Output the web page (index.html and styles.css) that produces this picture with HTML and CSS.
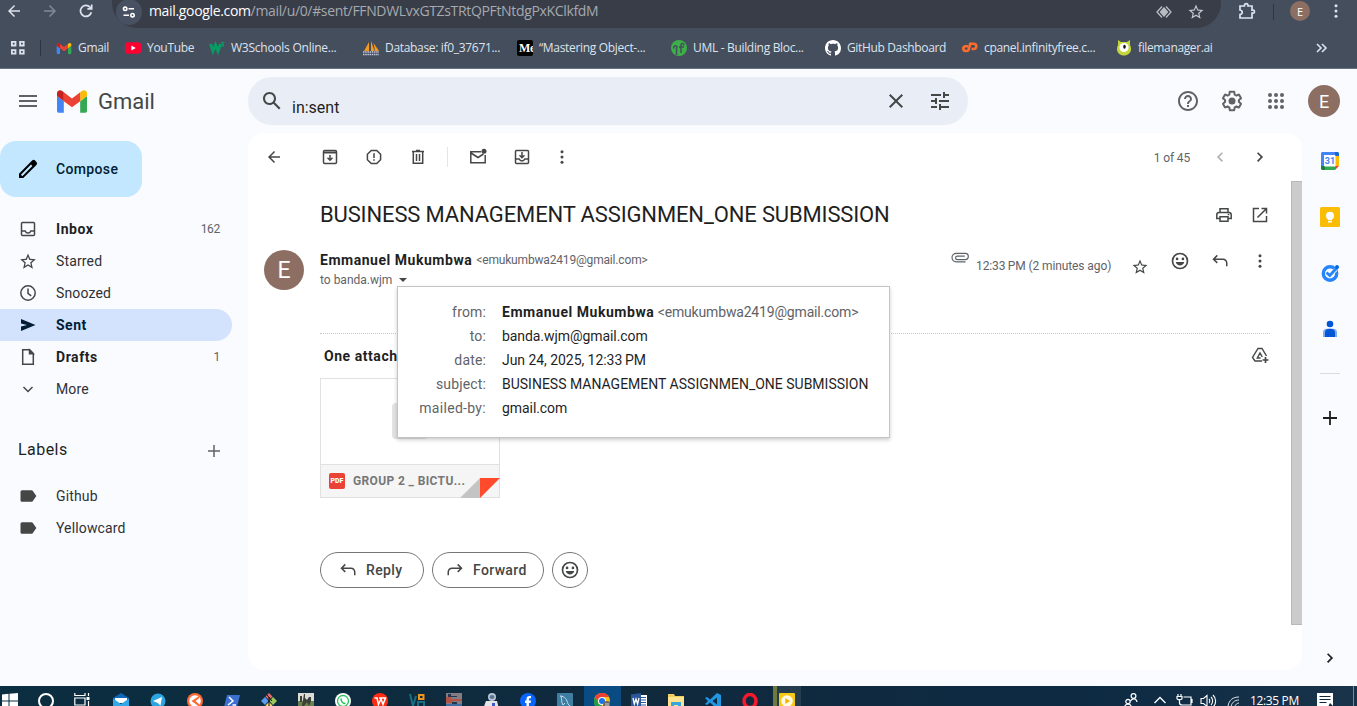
FILE: index.html
```html
<!DOCTYPE html>
<html lang="en">
<head>
<meta charset="utf-8">
<title>Gmail - Sent</title>
<link rel="stylesheet" href="styles.css">
</head>
<body>
<svg class="defs" width="0" height="0">
  <symbol id="star" viewBox="0 0 24 24"><path d="M22 9.24l-7.19-.62L12 2 9.19 8.63 2 9.24l5.46 4.73L5.82 21 12 17.27 18.18 21l-1.63-7.03L22 9.24zM12 15.4l-3.76 2.27 1-4.28-3.32-2.88 4.38-.38L12 6.1l1.71 4.04 4.38.38-3.32 2.88 1 4.28L12 15.4z"/></symbol>
  <symbol id="dots" viewBox="0 0 24 24"><circle cx="12" cy="5" r="2"/><circle cx="12" cy="12" r="2"/><circle cx="12" cy="19" r="2"/></symbol>
  <symbol id="gmail" viewBox="52 42 88 66"><path fill="#4285f4" d="M58 108h14V74L52 59v43c0 3.32 2.69 6 6 6"/><path fill="#34a853" d="M120 108h14c3.32 0 6-2.69 6-6V59l-20 15"/><path fill="#fbbc04" d="M120 48v26l20-15v-8c0-7.42-8.47-11.65-14.4-7.2"/><path fill="#ea4335" d="M72 74V48l24 18 24-18v26L96 92"/><path fill="#c5221f" d="M52 51v8l20 15V48l-5.6-4.2c-5.94-4.45-14.4-.22-14.4 7.2"/></symbol>
  <symbol id="back" viewBox="0 0 24 24"><path d="M20 11H7.83l5.59-5.59L12 4l-8 8 8 8 1.41-1.41L7.83 13H20v-2z"/></symbol>
  <symbol id="right" viewBox="0 0 24 24"><path d="M9.600 5.500 8 7.100l4.900 4.900L8 16.900l1.600 1.600 6.500-6.500z"/></symbol>
  <symbol id="smile" viewBox="0 0 24 24"><path fill-rule="evenodd" d="M12 2a10 10 0 1 0 0 20 10 10 0 0 0 0-20zm0 2a8 8 0 1 1 0 16 8 8 0 0 1 0-16z"/><circle cx="8.500" cy="9.500" r="1.600"/><circle cx="15.500" cy="9.500" r="1.600"/><path d="M6.800 13.200h10.400c-.8 2.600-2.800 4.300-5.200 4.300s-4.400-1.700-5.200-4.300z"/></symbol>
  <symbol id="reply" viewBox="0 0 24 24"><path d="M9.100 5.200 7.700 3.800 1.900 9.500l5.800 5.700 1.400-1.400-3.300-3.300H16c2.200 0 4 1.800 4 4V19h2v-4.500c0-3.300-2.700-6-6-6H5.800z"/></symbol>
  <symbol id="label" viewBox="0 0 24 24"><path d="M17.630 5.840C17.270 5.330 16.670 5 16 5L5 5.010C3.900 5.010 3 5.900 3 7v10c0 1.100.9 1.990 2 1.990L16 19c.67 0 1.270-.33 1.630-.84L22 12z"/></symbol>
</svg>

<header class="browser">
  <div class="toolbar">
    <div class="cell w28"><svg class="i18"><use href="#back"/></svg></div>
    <div class="cell w44 dim"><svg class="i18 flip"><use href="#back"/></svg></div>
    <div class="cell w28"><svg width="16" height="16" viewBox="0 0 16 16" fill="none" stroke="currentColor" stroke-width="1.700"><path d="M13.300 9.200A5.500 5.500 0 1 1 12 4.200l1.500 1.400"/><path d="M13.700 1.500v4.300H9.400"/></svg></div>
    <div class="omnibox">
      <span class="site"><svg width="14" height="14" viewBox="0 0 14 14" fill="none" stroke="currentColor" stroke-width="1.600"><circle cx="3.200" cy="3.800" r="1.700"/><path d="M6.500 3.800H12M1.500 10.200H7"/><circle cx="10.500" cy="10.200" r="1.700"/></svg></span>
      <span class="url"><b>mail.google.com</b>/mail/u/0/#sent/FFNDWLvxGTZsTRtQPFtNtdgPxKClkfdM</span>
      <svg class="lens" width="16" height="14" viewBox="0 0 16 14" fill="none" stroke="#b9bcc2" stroke-width="1.300"><path d="M6 1.500 1 7l5 5.500M10 1.500 15 7l-5 5.500"/><path fill="#b9bcc2" d="M8 3 4.500 7 8 11l3.500-4z"/></svg>
      <svg class="i18 ostar"><use href="#star"/></svg>
    </div>
    <div class="cell w52"><svg width="18" height="18" viewBox="0 0 18 18" fill="none" stroke="currentColor" stroke-width="1.700"><path d="M2 4h4.500V3a1.800 1.800 0 0 1 3.500 0v1h4v4.200h1a1.500 1.500 0 0 1 0 3h-1V16H2v-3.500c3-.5 3-4 0-4.500z"/></svg></div>
    <i class="vbar"></i>
    <div class="cell w52"><span class="avatar av20">E</span></div>
    <div class="cell w20"><svg class="i18"><use href="#dots"/></svg></div>
  </div>
  <nav class="bookmarks">
    <div class="apps"><svg width="16" height="16" viewBox="0 0 16 16" fill="none" stroke="currentColor" stroke-width="1.800"><path d="M1.900 1.900h3.600v3.600H1.900zM10.100 1.900h3.600v3.600h-3.600zM1.900 10.100h3.600v3.600H1.900zM10.100 10.100h3.600v3.600h-3.600z"/></svg></div>
    <i class="vbar"></i>
    <a class="bm b1"><svg width="16" height="11"><use href="#gmail"/></svg><span>Gmail</span></a>
    <a class="bm b2"><svg width="16" height="16" viewBox="0 0 16 16"><rect y="2.300" width="16" height="11.400" rx="3" fill="#f03"/><path d="M6.400 5.500v5L10.700 8z" fill="#fff"/></svg><span>YouTube</span></a>
    <a class="bm b3"><svg width="16" height="16" viewBox="0 0 16 16" fill="none" stroke="#089b63"><path stroke-width="3" d="M1.500 4l2.500 7L6.500 5l2.500 6 2.500-7"/><path stroke-width="1.200" d="M12 2.500h2.500L13.200 4.200c2 .2 1.700 2.500-.9 2"/></svg><span>W3Schools Online...</span></a>
    <a class="bm b4"><svg width="16" height="16" viewBox="0 0 16 16"><path fill="#f39a1f" d="M6 2 1 11h5zM8 1v10h3.500zM10.500 3l1.500 8h4z"/><path stroke="#c7cbe0" stroke-width="1.500" stroke-dasharray="1.500 .7" fill="none" d="M0 12h16M0 14.500h16"/></svg><span>Database: if0_37671...</span></a>
    <a class="bm b4"><span class="medium">Me</span><span>“Mastering Object-...</span></a>
    <a class="bm b4"><svg width="16" height="16" viewBox="0 0 16 16"><circle cx="8" cy="8" r="8" fill="#3daf48"/><path d="M5.500 15V8M2.500 8.500C3 5 6 5 6 8M10 13V5c0-2 3-2 3 .5M8 7h5" stroke="#454e5d" stroke-width="1.500" fill="none"/></svg><span>UML - Building Bloc...</span></a>
    <a class="bm b5"><svg width="16" height="16" viewBox="0 0 16 16"><path fill="#fff" d="M8 0C3.580 0 0 3.580 0 8c0 3.540 2.290 6.530 5.470 7.590.4.070.55-.17.55-.38 0-.19-.010-.82-.010-1.490-2.010.37-2.530-.49-2.690-.94-.09-.23-.48-.94-.82-1.130-.28-.15-.68-.52-.010-.53.63-.010 1.080.58 1.230.82.72 1.210 1.870.87 2.330.66.070-.52.28-.87.510-1.070-1.780-.2-3.640-.89-3.640-3.950 0-.87.310-1.590.82-2.150-.080-.2-.36-1.020.080-2.120 0 0 .67-.210 2.200.82.64-.18 1.320-.27 2-.27s1.360.09 2 .27c1.530-1.040 2.200-.82 2.200-.82.44 1.100.16 1.920.080 2.120.510.56.82 1.270.82 2.150 0 3.070-1.870 3.750-3.650 3.950.29.25.54.73.54 1.480 0 1.070-.010 1.930-.010 2.200 0 .210.15.46.55.38A8.010 8.010 0 0 0 16 8c0-4.420-3.580-8-8-8z"/></svg><span>GitHub Dashboard</span></a>
    <a class="bm b4"><svg width="16" height="16" viewBox="0 0 16 16" fill="none" stroke="#ff6c2c" stroke-width="2.600"><path d="M6 6.200H3.700a2.400 2.400 0 0 0 0 4.800H5c1 0 1.400-.5 1.600-1.300L8.200 3.800h3.500a2.600 2.600 0 0 1 0 5.200H9.500"/></svg><span>cpanel.infinityfree.c...</span></a>
    <a class="bm b6"><svg width="16" height="16" viewBox="0 0 16 16"><path fill="#c5d63c" d="M2 0l3 2h6l3-2v5c3 6-1 10.500-6 10.500S-1 11 2 5z"/><circle cx="8" cy="7.500" r="4.600" fill="#fff"/><ellipse cx="8.500" cy="6.800" rx="1.300" ry="2" fill="#111"/></svg><span>filemanager.ai</span></a>
    <svg class="more" width="12" height="10" viewBox="0 0 12 10" fill="none" stroke="currentColor" stroke-width="1.600"><path d="M1 1l4 4-4 4M6 1l4 4-4 4"/></svg>
  </nav>
</header>

<div class="app">
  <div class="top">
    <div class="brand">
      <svg width="24" height="24" viewBox="0 0 24 24" class="menu"><path d="M3 18h18v-2H3zm0-5h18v-2H3zM3 6v2h18V6z"/></svg>
      <svg width="30" height="23"><use href="#gmail"/></svg>
      <span class="wordmark">Gmail</span>
    </div>
    <div class="search">
      <svg width="24" height="24" viewBox="0 0 24 24"><path d="M20.490 19l-5.730-5.730C15.530 12.200 16 10.910 16 9.500 16 5.910 13.090 3 9.500 3S3 5.910 3 9.500 5.910 16 9.500 16c1.410 0 2.700-.47 3.770-1.240L19 20.490 20.490 19zM5 9.500C5 7.010 7.010 5 9.500 5S14 7.010 14 9.500 11.990 14 9.500 14 5 11.990 5 9.500z"/></svg>
      <span class="query">in:sent</span>
      <svg width="24" height="24" viewBox="0 0 24 24"><path d="M19 6.410L17.590 5 12 10.590 6.410 5 5 6.410 10.590 12 5 17.590 6.410 19 12 13.410 17.590 19 19 17.590 13.410 12z"/></svg>
      <svg width="24" height="24" viewBox="0 0 24 24" class="tune"><path d="M3 17v2h6v-2H3zM3 5v2h10V5H3zm10 16v-2h8v-2h-8v-2h-2v6h2zM7 9v2H3v2h4v2h2V9H7zm14 4v-2H11v2h10zm-6-4h2V7h4V5h-4V3h-2v6z"/></svg>
    </div>
    <div class="account">
      <svg width="24" height="24" viewBox="0 0 24 24"><path d="M11 18h2v-2h-2v2zm1-16C6.480 2 2 6.480 2 12s4.480 10 10 10 10-4.480 10-10S17.520 2 12 2zm0 18c-4.410 0-8-3.590-8-8s3.590-8 8-8 8 3.590 8 8-3.590 8-8 8zm0-14c-2.210 0-4 1.790-4 4h2c0-1.100.9-2 2-2s2 .9 2 2c0 2-3 1.750-3 5h2c0-2.250 3-2.500 3-5 0-2.210-1.790-4-4-4z"/></svg>
      <svg width="24" height="24" viewBox="0 0 24 24"><path d="M13.850 22.250h-3.700c-.74 0-1.360-.54-1.450-1.270l-.27-1.890c-.27-.14-.53-.29-.79-.46l-1.800.72c-.7.26-1.470-.03-1.810-.65L2.200 15.530c-.35-.66-.2-1.440.36-1.880l1.530-1.190c-.01-.15-.02-.3-.02-.46 0-.15.01-.31.02-.46l-1.520-1.190c-.59-.45-.74-1.260-.37-1.880l1.850-3.190c.34-.62 1.110-.9 1.790-.63l1.810.73c.26-.17.52-.32.78-.46l.27-1.910c.09-.7.71-1.250 1.440-1.250h3.700c.74 0 1.360.54 1.450 1.270l.27 1.890c.27.14.53.29.79.46l1.800-.72c.71-.26 1.480.03 1.820.65l1.840 3.180c.36.66.2 1.440-.36 1.880l-1.520 1.190c.01.15.02.3.02.46s-.01.31-.02.46l1.520 1.190c.56.45.72 1.230.37 1.860l-1.860 3.220c-.34.62-1.110.9-1.800.63l-1.800-.72c-.26.17-.52.32-.78.46l-.27 1.910c-.1.68-.72 1.220-1.460 1.220zm-3.230-2h2.760l.37-2.550.53-.22c.44-.18.88-.44 1.340-.78l.45-.34 2.380.96 1.380-2.400-2.030-1.580.07-.56c.03-.26.06-.51.06-.78s-.03-.53-.06-.78l-.07-.56 2.030-1.580-1.390-2.400-2.390.96-.45-.35c-.42-.32-.87-.58-1.330-.77l-.52-.22-.37-2.550h-2.760l-.37 2.550-.53.21c-.44.19-.88.44-1.340.79l-.45.33-2.380-.95-1.390 2.390 2.030 1.580-.07.56a7 7 0 0 0-.06.79c0 .26.02.53.06.78l.07.56-2.030 1.580 1.380 2.400 2.390-.96.45.35c.43.33.86.58 1.330.77l.53.22.38 2.550z"/><circle cx="12" cy="12" r="3.500"/></svg>
      <svg width="24" height="24" viewBox="0 0 24 24"><g id="r"><circle cx="6" cy="6" r="2"/><circle cx="12" cy="6" r="2"/><circle cx="18" cy="6" r="2"/></g><use href="#r" y="6"/><use href="#r" y="12"/></svg>
      <span class="avatar av32">E</span>
    </div>
  </div>

  <div class="body">
    <aside class="side">
      <div class="compose"><svg width="24" height="24" viewBox="0 0 24 24"><path fill-rule="evenodd" d="M20.400 4.900 19.100 3.600a2.100 2.100 0 0 0-3 0L3 16.700V21h4.300L20.400 7.900a2.100 2.100 0 0 0 0-3zM6.300 19.200 4.900 17.800 15 7.600 16.400 9z"/></svg><span>Compose</span></div>
      <div class="nav bold"><svg width="20" height="20" viewBox="0 0 20 20" fill="none" stroke="currentColor" stroke-width="1.500"><rect x="3.500" y="3.500" width="13" height="13" rx="1"/><path d="M3.500 12h3.700c1 2.700 4.600 2.700 5.600 0h3.700"/></svg><span>Inbox</span><em>162</em></div>
      <div class="nav"><svg width="19" height="19"><use href="#star"/></svg><span>Starred</span></div>
      <div class="nav"><svg width="20" height="20" viewBox="0 0 20 20" fill="none" stroke="currentColor" stroke-width="1.500"><circle cx="10" cy="10" r="7.200"/><path d="M10 5.500v4.800l3.200 2.600"/></svg><span>Snoozed</span></div>
      <div class="nav active"><svg width="20" height="20" viewBox="0 0 20 20"><path d="M3 16V11.500L9 10 3 8.500V4l14.500 6z"/></svg><span>Sent</span></div>
      <div class="nav bold"><svg width="20" height="20" viewBox="0 0 20 20" fill="none" stroke="currentColor" stroke-width="1.500"><path d="M4.700 2.800h7l3.600 3.700v10.700H4.700z"/><path fill="currentColor" d="M11.500 3v3.700h3.700z"/></svg><span>Drafts</span><em>1</em></div>
      <div class="nav"><svg width="20" height="20" viewBox="0 0 20 20" fill="none" stroke="currentColor" stroke-width="1.500"><path d="M5.500 8l4.500 4.500L14.500 8"/></svg><span>More</span></div>
      <div class="labels"><span>Labels</span><svg width="14" height="14" viewBox="0 0 14 14" stroke="currentColor" stroke-width="1.500"><path d="M7 1v12M1 7h12"/></svg></div>
      <div class="nav"><svg width="19" height="20"><use href="#label"/></svg><span>Github</span></div>
      <div class="nav"><svg width="19" height="20"><use href="#label"/></svg><span>Yellowcard</span></div>
    </aside>

    <main class="panel">
      <div class="actions">
        <div class="cell w52"><svg class="i18"><use href="#back"/></svg></div>
        <div class="cell w44 first"><svg width="20" height="20" viewBox="0 0 20 20" fill="none" stroke="currentColor" stroke-width="1.500"><rect x="3.500" y="3.500" width="13" height="13" rx="1.200"/><path d="M3.500 5.500h13" stroke-width="2"/><path d="M10 8v5M7.500 10.800l2.500 2.500 2.500-2.500"/></svg></div>
        <div class="cell w44"><svg width="20" height="20" viewBox="0 0 20 20" fill="none" stroke="currentColor" stroke-width="1.500"><path d="M7.300 3.400h5.400l3.900 3.900v5.400l-3.900 3.900H7.300l-3.900-3.900V7.300z"/><path d="M10 6.300v4.700M10 12.200v1.600"/></svg></div>
        <div class="cell w44"><svg width="20" height="20" viewBox="0 0 20 20" fill="none" stroke="currentColor" stroke-width="1.500"><path d="M5.300 5v11.300h9.400V5M4 4.500h12M8 3.500h4M8.500 7v7M11.500 7v7"/></svg></div>
        <i class="sep"></i>
        <div class="cell w44"><svg width="20" height="20" viewBox="0 0 20 20" fill="none" stroke="currentColor" stroke-width="1.500"><path d="M13 4.800H2.800v10.900h14.400V8M3 6l7 4.500L15.500 7"/><circle cx="16" cy="4.300" r="2.500" fill="currentColor" stroke="none"/></svg></div>
        <div class="cell w44"><svg width="20" height="20" viewBox="0 0 20 20" fill="none" stroke="currentColor" stroke-width="1.500"><rect x="3.500" y="3.500" width="13" height="13" rx="1"/><path d="M3.500 12h3.700c1 2.500 4.600 2.500 5.600 0h3.700M10 5v5.500M7.500 8.300l2.500 2.500 2.500-2.500"/></svg></div>
        <div class="cell w36"><svg class="i18"><use href="#dots"/></svg></div>
        <span class="count">1 of 45</span>
        <div class="cell w40 faint"><svg class="i18 flip"><use href="#right"/></svg></div>
        <div class="cell w40"><svg class="i18"><use href="#right"/></svg></div>
      </div>
      <div class="scroller">
        <div class="thread">
          <div class="subject">
            <h1>BUSINESS MANAGEMENT ASSIGNMEN_ONE SUBMISSION</h1>
            <div class="cell w36"><svg width="20" height="20" viewBox="0 0 20 20" fill="none" stroke="currentColor" stroke-width="1.500"><path d="M6 7V3.700h8V7M6 13.500H2.800V9.800c0-1.400.8-2.300 2.200-2.300h10c1.400 0 2.200.9 2.200 2.300v3.700H14"/><path d="M6 11.700h8v4.600H6z"/><path d="M13.700 9.500h1.600"/></svg></div>
            <div class="cell w36"><svg width="20" height="20" viewBox="0 0 20 20" fill="none" stroke="currentColor" stroke-width="1.500"><path d="M9 3.500H3.500v13h13V11M11.500 3.500h5v5M16.300 3.700 7.500 12.500"/></svg></div>
          </div>
          <div class="sender">
            <span class="avatar av40">E</span>
            <div class="who">
              <div class="from"><b>Emmanuel Mukumbwa</b><span>&lt;emukumbwa2419@gmail.com&gt;</span></div>
              <div class="to"><span>to banda.wjm</span><i class="caret"></i></div>
            </div>
            <svg class="clip" width="18" height="12" viewBox="0 0 18 12" fill="none" stroke="currentColor" stroke-width="1.200"><path d="M14.500 9.800H5.200a4.200 4.200 0 0 1 0-8.400h9a2.600 2.600 0 0 1 0 6.200H6.300a1.600 1.600 0 0 1 0-3.400h7.500"/></svg>
            <span class="time">12:33&#8201;PM (2 minutes ago)</span>
            <div class="cell w40 low"><svg class="i18"><use href="#star"/></svg></div>
            <div class="cell w40"><svg width="20" height="20"><use href="#smile"/></svg></div>
            <div class="cell w40"><svg class="i18"><use href="#reply"/></svg></div>
            <div class="cell w40"><svg class="i18"><use href="#dots"/></svg></div>
          </div>
          <div class="attach-head">
            <b>One attachment</b>
            <svg width="20" height="20" viewBox="0 0 20 20" fill="none" stroke="currentColor" stroke-width="1.400"><path d="M12 16H5L2.500 12.500 8 3.500h4L16.500 11M10.500 13H7.300L10 8l2.300 4"/><path d="M15.500 12v6M12.500 15h6" stroke-width="1.700"/></svg>
          </div>
          <div class="file">
            <div class="preview"><i></i></div>
            <div class="caption"><span class="pdf">PDF</span><span class="fname">GROUP 2 _ BICTU...</span>
              <svg class="fold" width="40" height="20" viewBox="0 0 40 20"><path fill="#c4c4c4" d="M0 20 20 0v20z"/><path fill="#ff4b2b" d="M20 0h20L20 20z"/></svg></div>
          </div>
          <div class="replies">
            <div class="pill p1"><svg class="i18"><use href="#reply"/></svg><span>Reply</span></div>
            <div class="pill p2"><svg class="i18 flip"><use href="#reply"/></svg><span>Forward</span></div>
            <div class="pill p3"><svg width="20" height="20"><use href="#smile"/></svg></div>
          </div>
          <dl class="details">
            <dt>from:</dt><dd><b>Emmanuel Mukumbwa</b> <span>&lt;emukumbwa2419@gmail.com&gt;</span></dd>
            <dt>to:</dt><dd class="d2">banda.wjm@gmail.com</dd>
            <dt>date:</dt><dd class="d3">Jun 24, 2025, 12:33&#8201;PM</dd>
            <dt>subject:</dt><dd class="d4">BUSINESS MANAGEMENT ASSIGNMEN_ONE SUBMISSION</dd>
            <dt class="wide">mailed-by:</dt><dd class="d2">gmail.com</dd>
          </dl>
        </div>
        <div class="thumb"></div>
      </div>
    </main>

    <aside class="addons">
      <svg width="20" height="20" viewBox="0 0 20 20"><path fill="#4285f4" d="M2 1h13v3H4v11H1V2z"/><path fill="#1967d2" d="M15 1h3l1 1v3h-4z"/><path fill="#fbbc04" d="M15 5h4v10h-4z"/><path fill="#34a853" d="M5 15h10v4H5z"/><path fill="#188038" d="M1 15h4v4H2l-1-1z"/><path fill="#ea4335" d="M15 15h4l-4 4z"/><path fill="#fff" d="M4.500 4.500h11v11h-11z"/><text x="10" y="13.200" text-anchor="middle" class="cal">31</text></svg>
      <svg width="20" height="20" viewBox="0 0 20 20"><rect width="20" height="20" rx="1.500" fill="#fbbc04"/><circle cx="10" cy="8.800" r="4" fill="#fff"/><path fill="#fff" d="M8 11h4v2.300H8zM8 14h4v1.500H8z"/></svg>
      <svg width="20" height="20" viewBox="0 0 20 20" fill="none"><circle cx="10" cy="10.500" r="6.700" stroke="#2684fc" stroke-width="3.400"/><path d="M6.800 9.500l3 3 6-6" stroke="#f8fafd" stroke-width="4"/><path d="M6.500 9.500l3.300 3 8.200-9" stroke="#2684fc" stroke-width="2.800"/><circle cx="17" cy="4" r="1.900" fill="#0066da"/></svg>
      <svg width="20" height="20" viewBox="0 0 20 20"><circle cx="10" cy="5" r="3.300" fill="#0056d6"/><path fill="#7baaf7" d="M3 18v-4.500C3 11 4.500 9.800 7 9.800h6c2.500 0 4 1.200 4 3.700V18z"/><path fill="#0056d6" d="M5 18v-4.300c0-2.500 1.500-3.900 5-3.900s5 1.400 5 3.900V18z"/></svg>
      <hr>
      <svg width="14" height="14" viewBox="0 0 14 14" stroke="#1f1f1f" stroke-width="1.800"><path d="M7 0v14M0 7h14"/></svg>
      <svg class="i18 expand"><use href="#right"/></svg>
    </aside>
  </div>
</div>

<footer class="taskbar">
  <div class="t start"><svg width="16" height="16" viewBox="0 0 16 16" fill="#fff"><path d="M0 1.500 6.500.8v6.700H0zM7.500.7 16 0v7.500H7.500zM0 8.500h6.500v6.700L0 14.500zM7.500 8.500H16V16l-8.500-.8z"/></svg></div>
  <div class="t"><svg width="16" height="16" viewBox="0 0 16 16" fill="none" stroke="#fff" stroke-width="2"><circle cx="8" cy="8" r="7"/></svg></div>
  <div class="t view"><svg width="16" height="16" viewBox="0 0 16 16" fill="none" stroke="#fff" stroke-width="1.200"><path d="M.8 0v2.500H11V0M.8 5h10.200v7H.8zM.8 16v-2H11v2M14.500 0v3M14.500 8v8"/><path stroke-width="3" d="M14 4v3"/></svg></div>
  <div class="t"><svg width="16" height="16" viewBox="0 0 16 16"><path fill="#1066b8" d="M0 5 8 0l8 5v4H0z"/><path fill="#fff" d="M2 5h12v5H2z"/><path fill="#32a8e8" d="M0 5.500 8 11l8-5.500V16H0z"/></svg></div>
  <div class="t"><svg width="16" height="16" viewBox="0 0 16 16"><circle cx="8" cy="8" r="7.500" fill="#2ca5e0"/><path fill="#fff" d="M3 8l9-4-1.500 8.500L7.700 10z"/></svg></div>
  <div class="t"><svg width="16" height="16" viewBox="0 0 16 16"><circle cx="8" cy="8" r="8" fill="#ff6a35"/><circle cx="8" cy="8" r="5.800" fill="#fff"/><path fill="#ff6a35" d="M12 3v2.200L8.500 8l3.500 3v2.500L4.500 8z"/></svg></div>
  <div class="t"><svg width="16" height="16" viewBox="0 0 16 16"><path fill="#3b6fd0" d="M3 2h13l-3 12H0z"/><path stroke="#fff" stroke-width="1.500" fill="none" d="M5 4l4 4-5 4M8.500 12H12"/></svg></div>
  <div class="t"><svg width="16" height="16" viewBox="0 0 16 16"><path fill="#e66c6c" d="M8 0l3.500 3.500L8 7 4.500 3.500z"/><path fill="#5b9cf0" d="M4 4l3.500 4L4 12 0 8z"/><path fill="#9cc95a" d="M12 4l4 4-4 4-3.500-4z"/><path fill="#f0d66b" d="M8 9l3.500 3.500L8 16l-3.500-3.500z"/><path stroke="#111" fill="none" d="M6 2l5 6M8 4v10"/></svg></div>
  <div class="t"><svg width="16" height="16" viewBox="0 0 16 16"><path fill="#dadcd5" d="M0 0h16v9H0z"/><path fill="#6d8050" d="M0 8h16v8H0z"/><path fill="#3b4038" d="M2 3h2v6H2zM6 1h1v4l2 2 2-3h2v4l-2 5-2-4-3 4H4z"/></svg></div>
  <div class="t"><svg width="16" height="16" viewBox="0 0 16 16"><circle cx="8" cy="8" r="8" fill="#fff"/><circle cx="8" cy="8" r="5.500" fill="none" stroke="#25c45b" stroke-width="1.300"/><path d="M6 5.500c0 3 2 5 4.500 5" stroke="#25c45b" stroke-width="1.500" fill="none"/></svg></div>
  <div class="t"><svg width="16" height="16" viewBox="0 0 16 16"><circle cx="8" cy="8" r="8" fill="#ff2a12"/><path stroke="#fff" stroke-width="1.500" fill="none" d="M2.500 5H5l1.500 6.500L9 6l2 5.500L13.500 5H7"/></svg></div>
  <div class="t"><svg width="16" height="16" viewBox="0 0 16 16" fill="none" stroke-width="2"><path stroke="#177083" d="M1 1l3 12 3-10M9 16V9h6v7"/><path stroke="#f0941e" d="M10 6V2h4.500v4z"/></svg></div>
  <div class="t"><svg width="16" height="16" viewBox="0 0 16 16"><path fill="#847c83" d="M0 0h16v16H0z"/><path fill="#b35345" d="M0 4h5v2h11v2H6v2H0z"/><path fill="#263551" d="M2 1h3v2h6v1H2zM6 9h5v2H6z"/><path fill="#3e6da0" d="M0 11h16v5H0z"/></svg></div>
  <div class="t"><svg width="16" height="16" viewBox="0 0 16 16"><circle cx="9" cy="4" r="4" fill="#b9c7d7"/><ellipse cx="9" cy="4" rx="2.500" ry="2" fill="#5e7690"/><path fill="#e4e6ec" d="M3 8h11l2 8H0z"/><path fill="#3f59c7" d="M9 10h3v3H9z"/></svg></div>
  <div class="t"><svg width="16" height="16" viewBox="0 0 16 16"><circle cx="8" cy="8" r="8" fill="#0866ff"/><path fill="#fff" d="M6.500 16V10H5V7.500h1.500V6c0-2 1-3 3-3h1.500v2.300H10c-.8 0-1.100.3-1.100 1v1.200H11L10.600 10H8.900v6z"/></svg></div>
  <div class="t"><svg width="16" height="16" viewBox="0 0 16 16"><rect width="16" height="16" rx="1" fill="#3d7ea2"/><path d="M3 3c5 0 7 4 8 8l3 3M4 3c1 3 0 6 2 9l2-2" stroke="#c7dce8" fill="none"/></svg></div>
  <div class="t chrome"><svg width="16" height="16" viewBox="0 0 16 16"><circle cx="8" cy="8" r="8" fill="#fbc116"/><path fill="#ea4335" d="M1 4a8 8 0 0 1 14 0H8L4.500 10z"/><path fill="#229a4b" d="M1 4l4 7 3 1-2 4A8 8 0 0 1 1 4z"/><circle cx="8" cy="8" r="4" fill="#fff"/><circle cx="8" cy="8" r="3" fill="#1a73e8"/><circle cx="13" cy="12" r="4" fill="#6c6964"/><path stroke="#fff" stroke-width=".7" d="M12 10v4M14 10v4"/></svg></div>
  <div class="t"><svg width="16" height="16" viewBox="0 0 16 16"><path fill="#fff" d="M8 2h8v13H8z"/><path stroke="#2b579a" d="M10 4.500h5M10 7h5M10 9.500h5M10 12h5"/><path fill="#2b579a" d="M0 1.500 10 0v16L0 14.500z"/><path stroke="#fff" stroke-width="1.300" fill="none" d="M2 5l1.300 6L5 6l1.600 5L8 5"/></svg></div>
  <div class="t"><svg width="16" height="16" viewBox="0 0 16 16"><path fill="#f4cd59" d="M0 1h6l1 2h9v13H0z"/><path fill="#ffe391" d="M0 4h16v12H0z"/><path fill="#37a6dc" d="M3 9h10v7h-3v-4H6v4H3z"/></svg></div>
  <div class="t"><svg width="16" height="16" viewBox="0 0 16 16"><path fill="#2196e3" d="M12 0l4 2v12l-4 2-7-6.500L2 12 0 11l3-3-3-3 2-1 3 2.500zM12 4.500 7.500 8l4.500 3.500z" fill-rule="evenodd"/></svg></div>
  <div class="t"><svg width="16" height="16" viewBox="0 0 16 16"><ellipse cx="8" cy="8" rx="6" ry="6.500" stroke="#f6192c" stroke-width="3.500" fill="none"/></svg></div>
  <div class="t media"><svg width="16" height="16" viewBox="0 0 16 16"><rect width="16" height="16" rx="1" fill="#f6c914"/><circle cx="8" cy="8" r="5.800" fill="#fffbe6"/><path fill="#f0b400" d="M6.300 5v6L11 8z"/></svg></div>
  <div class="tray">
    <svg class="people" width="16" height="16" viewBox="0 0 16 16" fill="none" stroke="#fff" stroke-width="1.200"><circle cx="10.500" cy="3" r="2.400"/><path d="M7.500 8c2-3.500 6-2.500 6.500 1"/><circle cx="5" cy="8.500" r="2.200"/><path d="M1.500 15c0-5 7-5 7 0"/></svg>
    <svg class="chev" width="14" height="16" viewBox="0 0 14 16" fill="none" stroke="#fff" stroke-width="1.300"><path d="M1.500 10 7 4.500l5.500 5.500"/></svg>
    <svg class="power" width="17" height="16" viewBox="0 0 17 16" fill="none" stroke="#fff" stroke-width="1.200"><path d="M2 1v2M5 1v2M1 3.500h5v2c0 1.500-5 1.500-5 0zM3.500 7v3c0 2 1.500 2 3 2H15V4H7.500M16 6v4"/></svg>
    <svg class="volume" width="17" height="16" viewBox="0 0 17 16" fill="none" stroke="#fff" stroke-width="1.100"><path d="M1 5.500h2.500L7 2.500v11L3.500 10.500H1zM9 6c1 1 1 3 0 4M11 4c2.200 2 2.200 6 0 8M13 2c3.500 3.300 3.500 8.700 0 12"/></svg>
    <svg class="wifi" width="15" height="16" viewBox="0 0 15 16" fill="none" stroke="#dfe6ea" stroke-width="1"><path d="M1 13C2 7 6 4 12 4M4 15c0-5 3.500-8 8-8M7.500 16c0-3.500 2-6 4.500-6M10.500 16c0-2 .5-3 1.500-3"/></svg>
    <span class="clock">12:35 PM</span>
    <svg class="note" width="16" height="16" viewBox="0 0 16 16"><path fill="#fff" d="M0 0h16v13H0z"/><path stroke="#12263a" d="M2.500 3.500h11M2.500 6.500h11M2.500 9.500h7"/><path fill="#12263a" d="M10 16l3-6 3 3v3z"/></svg>
    <i class="peek"></i>
  </div>
</footer>
</body>
</html>
```
FILE: styles.css
```css
* { box-sizing: border-box; }
body { margin: 0; width: 1357px; height: 706px; overflow: hidden; background: #f9fbff; font-family: Roboto, "Liberation Sans", sans-serif; color: #1f1f1f; font-size: 14px; }
svg { display: block; flex: none; }
svg:not([fill]) { fill: currentColor; }
.defs { position: absolute; }
.i18 { width: 18px; height: 18px; }
.flip { transform: scaleX(-1); }
.cell { flex: none; display: flex; align-items: center; justify-content: center; }
.w20 { width: 20px; } .w28 { width: 28px; } .w36 { width: 36px; } .w40 { width: 40px; } .w44 { width: 44px; } .w52 { width: 52px; }
.avatar { flex: none; display: flex; align-items: center; justify-content: center; border-radius: 50%; background: #8d6e63; color: #fff; }
.av20 { width: 20px; height: 20px; font-size: 11px; }
.av32 { width: 32px; height: 32px; font-size: 18px; }
.av40 { width: 40px; height: 40px; font-size: 23px; }

/* Browser chrome */
.browser { height: 69px; background: #454e5d; border-bottom: 1px solid #667286; color: #dde3ee; font-family: "Open Sans", "Noto Sans", sans-serif; }
.toolbar { display: flex; height: 28px; align-items: center; }
.toolbar > .cell { height: 22px; margin-bottom: 6px; }
.dim { color: #828996; }
.omnibox { display: flex; align-items: center; width: 1109px; height: 50px; margin: -22px 0 0 12px; padding: 17px 0 0 4px; border-radius: 25px; background: #383d48; }
.site { display: flex; align-items: center; justify-content: center; width: 26px; height: 26px; border-radius: 50%; background: #485161; color: #fff; }
.url { flex: 1; margin: -2px 0 0 7px; font-size: 14px; letter-spacing: -.34px; color: #a6a9af; white-space: nowrap; }
.url b { font-weight: 400; color: #fff; }
.ostar { margin: 0 16px 0 15px; color: #c3c7cf; }
.vbar { flex: none; width: 1px; height: 16px; background: #2e3541; }
.toolbar .vbar { margin-bottom: 5px; }
.bookmarks { display: flex; align-items: center; height: 40px; font-size: 12px; }
.apps { width: 40px; padding-left: 10px; }
.bookmarks .vbar { margin-right: 15px; }
.bm { display: flex; align-items: center; gap: 6px; white-space: nowrap; letter-spacing: -.3px; }
.bm > span:last-child { margin-top: -1px; }
.b1 { width: 69px; } .b2 { width: 84px; } .b3, .b4 { width: 154px; } .b5 { width: 137px; } .b6 { width: 200px; }
.b3 { letter-spacing: -.25px; }
.b4 { letter-spacing: -.32px; }
.b5 { letter-spacing: -.35px; }
.b6 { letter-spacing: -.37px; }
.medium { display: flex; width: 16px; height: 16px; overflow: hidden; padding-left: 2px; align-items: center; border-radius: 2px; background: #000; color: #fff; font: bold 12px "Liberation Serif", serif; }

/* Gmail header */
.app { height: 617px; color: #444746; }
.top { display: flex; height: 64px; align-items: center; }
.brand { display: flex; width: 248px; align-items: center; padding-left: 16px; color: #5f6368; }
.menu { margin-right: 17px; }
.wordmark { margin-left: 11px; font-size: 22px; color: #444746; }
.search { display: flex; width: 720px; height: 48px; padding: 0 16px 0 12px; align-items: center; border-radius: 24px; background: #e9eef6; }
.query { flex: 1; margin: 12px 0 0 8px; font-size: 16px; color: #1f1f1f; }
.tune { margin-left: 20px; }
.account { display: flex; align-items: center; gap: 20px; margin-left: 208px; color: #5f6368; }

/* Sidebar */
.body { display: flex; height: 553px; }
.side { width: 248px; padding-top: 8px; }
.compose { display: flex; align-items: center; width: 142px; height: 56px; margin-bottom: 16px; padding-left: 16px; gap: 16px; border-radius: 16px; background: #c2e7ff; color: #001d35; font-weight: 500; letter-spacing: .35px; }
.compose svg { fill: #000; }
.nav { display: flex; align-items: center; width: 232px; height: 32px; padding: 0 12px 0 18px; border-radius: 0 16px 16px 0; }
.nav svg { width: 20px; margin-right: 18px; }
.nav span { flex: 1; color: #303134; letter-spacing: .15px; }
.nav em { font-style: normal; font-size: 12px; letter-spacing: -.3px; color: #5f6368; }
.nav.bold span { font-weight: 700; letter-spacing: .55px; color: #1f1f1f; }
.active { background: #d3e3fd; color: #001d35; }
.nav.active span { font-weight: 700; letter-spacing: .5px; color: #001d35; }
.labels { display: flex; align-items: center; justify-content: space-between; width: 221px; height: 75px; padding: 13px 0 0 18px; font-size: 16px; letter-spacing: .45px; color: #1f1f1f; }
.labels svg { color: #5f6368; margin-top: 3px; }

/* Message panel */
.panel { width: 1054px; height: 537px; border-radius: 16px; background: #fff; }
.actions { display: flex; height: 48px; align-items: center; }
.first { margin-left: 8px; }
.sep { width: 1px; height: 20px; margin: 0 8px 0 7px; background: #e3e5e8; }
.count { flex: 1; padding: 1px 10px 0 0; text-align: right; font-size: 12px; letter-spacing: -.15px; color: #5f6368; }
.actions .w40:last-child { margin-right: 22px; }
.faint { color: #b0b2b5; }
.scroller { display: flex; height: 489px; }
.thread { position: relative; width: 1043px; }
.thumb { width: 11px; height: 444px; background: #cbcbcb; border: 1px solid #b9b9b9; border-right: 0; }
.subject { display: flex; height: 66px; padding: 2px 13px 0 72px; align-items: center; }
h1 { flex: 1; margin: -2px 0 0; font-size: 22px; font-weight: 400; letter-spacing: -.14px; color: #1f1f1f; white-space: nowrap; }
.sender { display: flex; height: 86px; margin-right: 11px; padding: 3px 0 0 16px; }
.who { flex: 1; padding-left: 16px; }
.from, .to { display: flex; height: 20px; align-items: center; font-size: 12px; color: #5f6368; }
.from b { margin-right: 4px; font-size: 14px; letter-spacing: .53px; color: #1f1f1f; }
.from span { letter-spacing: -.17px; }
.caret { margin-left: 7px; border: 4px solid transparent; border-top-color: #444746; border-bottom: 0; }
.clip { margin: 2px 7px 0 0; color: #5f6368; }
.time { width: 144px; margin-top: 9px; font-size: 12px; letter-spacing: -.1px; color: #5f6368; white-space: nowrap; }
.sender .cell { height: 22px; }
.sender .low { margin-top: 6px; }
.attach-head { display: flex; justify-content: space-between; align-items: center; height: 45px; margin: 0 21px 0 72px; padding-left: 4px; border-top: 1px dotted #c8c8c8; letter-spacing: .55px; color: #1f1f1f; }
.attach-head svg { margin-top: -2px; color: #444746; }
.file { width: 180px; height: 120px; margin-left: 72px; border: 1px solid #e1e1e1; }
.preview { height: 85px; padding: 24px 0 0 71px; }
.preview i { display: block; width: 36px; height: 36px; border-radius: 4px; background: #e3e3e3; }
.caption { display: flex; position: relative; height: 33px; align-items: center; padding-left: 8px; border-top: 1px solid #e1e1e1; background: #f5f5f5; }
.pdf { width: 16px; height: 16px; border-radius: 2px; background: #ea4335; color: #fff; font-size: 7px; font-weight: 900; line-height: 16px; text-align: center; }
.fname { margin: -1px 0 0 8px; font-size: 12px; font-weight: 700; letter-spacing: .37px; color: #777; white-space: nowrap; }
.fold { position: absolute; right: -1px; bottom: -1px; }
.replies { display: flex; gap: 8px; margin: 54px 0 0 72px; color: #444746; }
.pill { display: flex; align-items: center; height: 36px; border: 1px solid #747775; border-radius: 18px; font-weight: 500; }
.pill span { margin-left: 9px; letter-spacing: .35px; }
.p1 { width: 104px; padding-left: 18px; } .p2 { width: 112px; padding-left: 13px; } .p3 { width: 36px; justify-content: center; }
.details { position: absolute; left: 149px; top: 105px; width: 493px; height: 152px; margin: 0; padding: 13px 0 0 20px; display: grid; grid-template-columns: 68px 1fr; grid-auto-rows: 24px; column-gap: 16px; align-content: start; line-height: 24px; background: #fff; border: 1px solid #c4c4c4; box-shadow: 0 2px 4px rgba(0,0,0,.2); white-space: nowrap; }
dt { text-align: right; letter-spacing: .15px; color: #5f6368; }
.wide { letter-spacing: .3px; }
dd { margin: 0; color: #1f1f1f; }
dd b { letter-spacing: .53px; }
dd span { letter-spacing: -.17px; color: #5f6368; }
.d2 { letter-spacing: -.07px; }
.d3 { letter-spacing: -.05px; }

/* Add-on rail */
.addons { display: flex; flex-direction: column; align-items: center; width: 55px; padding-top: 18px; gap: 36px; }
.addons hr { width: 20px; height: 1px; margin: -2px 0 1px; border: 0; background: #dadce0; }
.cal { font: bold 9px Roboto, sans-serif; fill: #4285f4; }
.expand { margin-top: auto; margin-bottom: 19px; color: #1f1f1f; }

/* Windows taskbar */
.taskbar { display: flex; height: 20px; overflow: hidden; background: linear-gradient(90deg, #0b2e40, #10293d 50%, #0d2a43 80%, #18334a); }
.t { flex: none; width: 37px; height: 36px; padding: 7px 0 0 10px; }
.start { padding-left: 2px; width: 28px; }
.view { width: 38px; padding-left: 9px; }
.chrome { background: #0a4b83; }
.media { width: 28px; margin-left: 4px; padding-left: 2px; background: #243c4b; border-left: 4px solid #6c7a3d; }
.tray { display: flex; align-items: flex-start; margin-left: auto; padding-top: 7px; }
.people { margin-right: 14px; }
.chev { margin-right: 9px; }
.power { margin-right: 7px; }
.volume { margin-right: 10px; }
.wifi { margin-right: 8px; }
.clock { width: 57px; font: 12px/15px "Open Sans", sans-serif; letter-spacing: -.35px; color: #fff; }
.note { margin: 0 20px 0 10px; }
.peek { width: 1px; height: 20px; margin: -7px 3px 0 0; background: #7a8a97; }
```
